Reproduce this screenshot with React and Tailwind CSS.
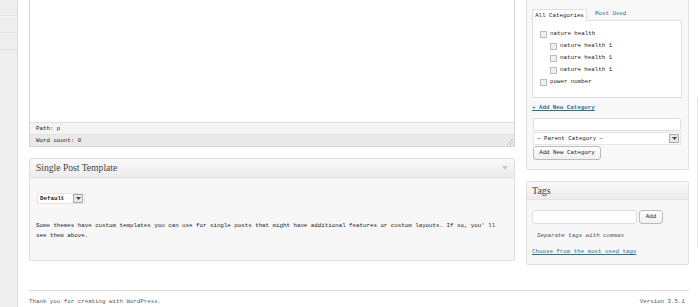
import React from "react";

const mono = "font-['Liberation_Mono','DejaVu_Sans_Mono',monospace]";
const serif = "font-['Liberation_Serif','DejaVu_Serif',serif]";

function Box({ children, className = "" }) {
  return <div className={"border border-[#dfdfdf] bg-[#f7f7f7] rounded-[2px] " + className}>{children}</div>;
}

function DropBtn() {
  return (
    <div className="w-[10px] h-[9px] border border-[#aaa] bg-[#e8e8e8] flex items-center justify-center">
      <svg width="5" height="3" viewBox="0 0 5 3"><path d="M0 0h5L2.5 3z" fill="#444" /></svg>
    </div>
  );
}

function Check({ label, indent }) {
  return (
    <div className={"flex items-center h-[12px] " + (indent ? "pl-[17px]" : "pl-[7px]")}>
      <div className="w-[7px] h-[7px] border border-[#bbb] bg-[#f0f0f0] mr-[3px]" />
      <span>{label}</span>
    </div>
  );
}

export default function App() {
  return (
    <div className={"w-[700px] h-[307px] bg-white flex overflow-hidden text-[#222] " + mono + " text-[5.8px] leading-none"}>
      {/* sidebar */}
      <div className="w-[18px] shrink-0 bg-[#eeeeee] border-r border-[#dcdcdc] flex flex-col">
        <div className="h-[16px] border-b border-[#e2e2e2]" />
        <div className="h-[17px] border-b border-[#e2e2e2] border-t border-t-[#f7f7f7]" />
        <div className="h-[17px] border-b border-[#e2e2e2] border-t border-t-[#f7f7f7]" />
      </div>

      <div className="flex-1 flex flex-col pl-[11px]">
        <div className="flex h-[290px]">
          {/* left column */}
          <div className="w-[486px] shrink-0 flex flex-col">
            <div className="h-[147px] border-l border-r border-b border-[#d6d6d6] bg-white flex flex-col">
              <div className="flex-1" />
              <div className="h-[12px] border-t border-[#e0e0e0] bg-[#f4f4f4] flex items-center pl-[6px]">Path: p</div>
              <div className="h-[12px] border-t border-[#e3e3e3] bg-[#e9e9e9] flex items-center pl-[6px] relative">
                Word count: 0
                <svg className="absolute right-0 bottom-0" width="8" height="8" viewBox="0 0 8 8">
                  <path d="M7 1L1 7M7 4L4 7M7 6.5L6.5 7" stroke="#c4c4c4" strokeWidth="1" />
                </svg>
              </div>
            </div>
            <Box className="mt-[11px] h-[103px] flex flex-col">
              <div className="h-[19px] border-b border-[#e2e2e2] bg-gradient-to-b from-[#f9f9f9] to-[#ececec] flex items-center justify-between px-[6px]">
                <span className={serif + " text-[9.6px] text-[#464646]"}>Single Post Template</span>
                <svg width="6" height="4" viewBox="0 0 6 4"><path d="M0 0h6L3 4z" fill="#c8c8c8" /></svg>
              </div>
              <div className="px-[7px] pt-[15px]">
                <div className="w-[48px] h-[11px] bg-white border border-[#e4e4e4] flex items-center justify-between pl-[2px] pr-[1px] font-bold">
                  <span>Default</span>
                  <DropBtn />
                </div>
                <p className="mt-[17px] leading-[10px] pr-[4px] -ml-[1px]">
                  Some themes have custom templates you can use for single posts that might have additional features or custom layouts. If so, you' ll see them above.
                </p>
              </div>
            </Box>
          </div>

          {/* right column */}
          <div className="w-[163px] shrink-0 ml-[11px] flex flex-col">
            <div className="h-[170px] border-l border-r border-b border-[#dfdfdf] bg-[#f8f8f8] rounded-b-[2px] px-[5px] pt-[8px]">
              <div className="flex items-end h-[12px]">
                <div className="h-[12px] w-[55px] bg-white border border-b-0 border-[#dfdfdf] flex items-center justify-center relative z-10 -mb-px">All Categories</div>
                <div className="ml-[8px] h-[12px] flex items-center text-[#21759b]">Most Used</div>
              </div>
              <div className="h-[78px] bg-white border border-[#dfdfdf] pt-[7px] mr-[1px]">
                <Check label="nature health" />
                <Check label="nature health 1" indent />
                <Check label="nature health 1" indent />
                <Check label="nature health 1" indent />
                <Check label="power number" />
              </div>
              <div className="mt-[7px] h-[6px] font-bold text-[#21759b] underline">+ Add New Category</div>
              <div className="mt-[7px] ml-[1px] mr-[2px] h-[13px] bg-white border border-[#dfdfdf] rounded-[2px]" />
              <div className="mt-[1px] ml-[1px] mr-[2px] h-[13px] bg-white border border-[#e6e6e6] flex items-center justify-between pl-[3px] pr-[1px]">
                <span>— Parent Category —</span>
                <DropBtn />
              </div>
              <div className="mt-[1px] ml-[1px] w-[68px] h-[14px] rounded-[3px] border border-[#bbb] bg-gradient-to-b from-white to-[#f0f0f0] flex items-center justify-center">Add New Category</div>
            </div>

            <Box className="mt-[11px] h-[84px] flex flex-col">
              <div className="h-[18px] border-b border-[#e2e2e2] bg-gradient-to-b from-[#f9f9f9] to-[#ececec] flex items-center px-[5px]">
                <span className={serif + " text-[10px] text-[#464646]"}>Tags</span>
              </div>
              <div className="px-[5px] pt-[10px]">
                <div className="flex items-center">
                  <div className="w-[105px] h-[14px] bg-white border border-[#dfdfdf] rounded-[3px]" />
                  <div className="ml-[2px] w-[24px] h-[14px] rounded-[3px] border border-[#bbb] bg-gradient-to-b from-white to-[#f0f0f0] flex items-center justify-center">Add</div>
                </div>
                <div className="mt-[9px] pl-[5px] italic text-[#555]">Separate tags with commas</div>
                <div className="mt-[10px] text-[#21759b] underline">Choose from the most used tags</div>
              </div>
            </Box>
          </div>
          <div className="flex-1 flex justify-end pr-[2px]">
            <div className="mt-[98px] h-[150px] border-r border-[#e6e6e6]" />
          </div>
        </div>
        <div className="mr-[11px] border-t border-[#dedede] flex justify-between items-end h-[17px] pb-[2px] pr-[4px] text-[#555]">
          <span>Thank you for creating with <span className="text-[#21759b]">WordPress</span>.</span>
          <span>Version 3.5.1</span>
        </div>
      </div>
    </div>
  );
}
